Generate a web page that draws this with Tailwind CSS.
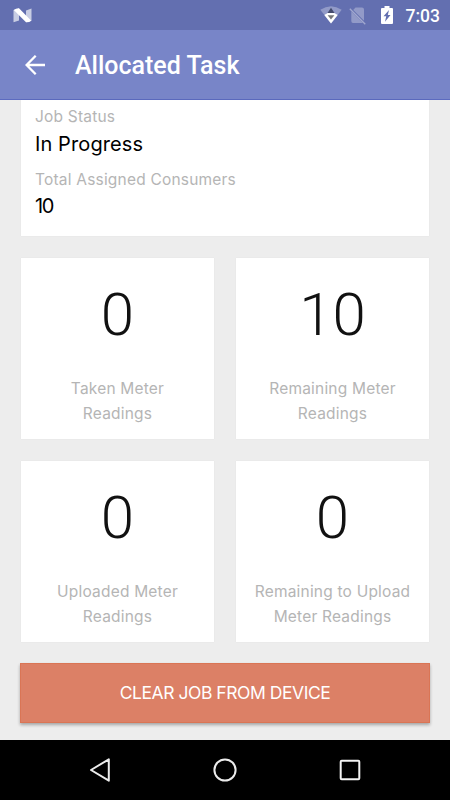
<!DOCTYPE html>
<html lang="en">
<head>
  <meta charset="UTF-8">
  <title>Allocated Task</title>
  <script src="https://cdn.jsdelivr.net/npm/@tailwindcss/browser@4"></script>
</head>
<body class="w-[450px] h-[800px] overflow-hidden flex flex-col bg-[#ededed] font-['Inter',sans-serif]">

<!-- Status bar -->
<div class="h-[30px] shrink-0 bg-[#636fb0] flex items-center justify-between pl-[13px] pr-[10px]">
  <svg class="w-[19px] h-[15px]" viewBox="0 0 19 15">
    <path d="M0.5 2 L6 0.5 V12.5 L0.5 14.2 Z M13 2.5 L18.5 0.5 V12.7 L13 14.2 Z" fill="#fff" fill-opacity=".65"/>
    <path d="M0.8 2 Q3 .1 6 .2 L18.3 12.7 Q16 14.5 13 14.2 Z" fill="#fff"/>
  </svg>
  <div class="flex items-center">
    <svg class="w-[22px] h-[18px]" viewBox="0 0 22 18">
      <path d="M0.3 3.8 Q11 -3.5 21.7 3.8 L11 17.5 Z" fill="#fff" fill-opacity=".3"/>
      <path d="M4.3 9 Q11 4.2 17.7 9 L11 17.5 Z" fill="#fff"/>
      <path d="M11 1.7 L14.5 6.9 H7.5 Z" fill="#434a6c"/>
      <path d="M7.6 9.2 H14.4 L11 13.5 Z" fill="#77777a"/>
    </svg>
    <svg class="w-[18px] h-[19px] ml-[7px]" viewBox="0 0 18 19">
      <path d="M6.5 1.5 H13 Q15 1.5 15 3.5 V14.7 L4.2 4 Z" fill="#fff" fill-opacity=".3"/>
      <path d="M2.3 5.5 L13.8 17 H4 Q2.3 17 2.3 15 Z" fill="#fff" fill-opacity=".3"/>
      <path d="M0.8 2.7 L16.3 18.2" stroke="#fff" stroke-opacity=".4" stroke-width="1.3"/>
    </svg>
    <svg class="w-[12px] h-[18px] ml-[14px] mr-[13px]" viewBox="0 0 12 18">
      <path d="M3.5 0 H8.5 V2 H11 Q12 2 12 3 V17 Q12 18 11 18 H1 Q0 18 0 17 V3 Q0 2 1 2 H3.5 Z" fill="#fff"/>
      <path d="M8 4 L2.5 10.3 H5.2 L4 15.8 L9.5 9 H6.8 Z" fill="#636fb0"/>
    </svg>
    <span class="font-['Roboto'] font-medium text-[17.5px] leading-[30px] text-white mt-[2px]">7:03</span>
  </div>
</div>

<!-- Header -->
<div class="h-[70px] shrink-0 bg-[#7885c8] border-b border-[#5c6bc0] flex items-center pl-[25px]">
  <svg class="w-5 h-5" viewBox="0 0 20 20" fill="none" stroke="#fff" stroke-width="2.3">
    <path d="M20 10 H2 M10.7 .8 L1.6 10 L10.7 19.2"/>
  </svg>
  <h1 class="font-['Roboto'] font-medium text-[25px] text-white ml-[30px] mt-[3px]">Allocated Task</h1>
</div>

<!-- Content -->
<div class="flex-1 px-[21px] flex flex-col">
  <div class="h-[136px] w-[408px] bg-white pl-[14px] shadow-[0_0_1px_rgba(0,0,0,0.08)]">
    <p class="text-[15.5px] leading-[25px] tracking-[0.2px] text-[#b5b5b5] pt-[4px]">Job Status</p>
    <p class="text-[20px] leading-[30px] tracking-[0.1px] text-black">In Progress</p>
    <p class="text-[15.5px] leading-[25px] tracking-[0.2px] text-[#b5b5b5] pt-[8px]">Total Assigned Consumers</p>
    <p class="text-[20px] leading-[28px] tracking-[-1.5px] text-black">10</p>
  </div>

  <div class="grid grid-cols-2 gap-[22px] mt-[22px] w-[408px]">
    <div class="h-[181px] bg-white text-center shadow-[0_0_1px_rgba(0,0,0,0.08)]">
      <p class="font-['Roboto'] font-light text-[60px] leading-[72px] text-[#111] pt-[21px]">0</p>
      <p class="text-[15.5px] leading-[25px] tracking-[0.2px] text-[#b5b5b5] mt-[25px]">Taken Meter<br>Readings</p>
    </div>
    <div class="h-[181px] bg-white text-center shadow-[0_0_1px_rgba(0,0,0,0.08)]">
      <p class="font-['Roboto'] font-light text-[60px] leading-[72px] text-[#111] pt-[21px]">10</p>
      <p class="text-[15.5px] leading-[25px] tracking-[0.2px] text-[#b5b5b5] mt-[25px]">Remaining Meter<br>Readings</p>
    </div>
    <div class="h-[181px] bg-white text-center shadow-[0_0_1px_rgba(0,0,0,0.08)]">
      <p class="font-['Roboto'] font-light text-[60px] leading-[72px] text-[#111] pt-[21px]">0</p>
      <p class="text-[15.5px] leading-[25px] tracking-[0.2px] text-[#b5b5b5] mt-[25px]">Uploaded Meter<br>Readings</p>
    </div>
    <div class="h-[181px] bg-white text-center shadow-[0_0_1px_rgba(0,0,0,0.08)]">
      <p class="font-['Roboto'] font-light text-[60px] leading-[72px] text-[#111] pt-[21px]">0</p>
      <p class="text-[15.5px] leading-[25px] tracking-[0.2px] text-[#b5b5b5] mt-[25px]">Remaining to Upload<br>Meter Readings</p>
    </div>
  </div>

  <button class="h-[60px] -mx-px mt-[21px] bg-[#dc8066] border border-[#da7555] text-white text-[17.5px] tracking-[-0.45px] shadow-[0_2px_3px_rgba(0,0,0,0.3)]">CLEAR JOB FROM DEVICE</button>
</div>

<!-- Navigation bar -->
<div class="h-[60px] shrink-0 bg-black flex items-center justify-between px-[88px]">
  <svg class="w-6 h-6" viewBox="0 0 24 24" fill="none" stroke="#ececec" stroke-width="2" stroke-linejoin="round">
    <path d="M20.8 1.3 V22.7 L3 12 Z"/>
  </svg>
  <svg class="w-6 h-6" viewBox="0 0 24 24" fill="none" stroke="#ececec" stroke-width="2">
    <circle cx="12" cy="12" r="10.6"/>
  </svg>
  <svg class="w-6 h-6" viewBox="0 0 24 24" fill="none" stroke="#f4f4f4" stroke-width="2">
    <rect x="2.7" y="2.7" width="18.6" height="18.6" rx="1"/>
  </svg>
</div>

</body>
</html>
